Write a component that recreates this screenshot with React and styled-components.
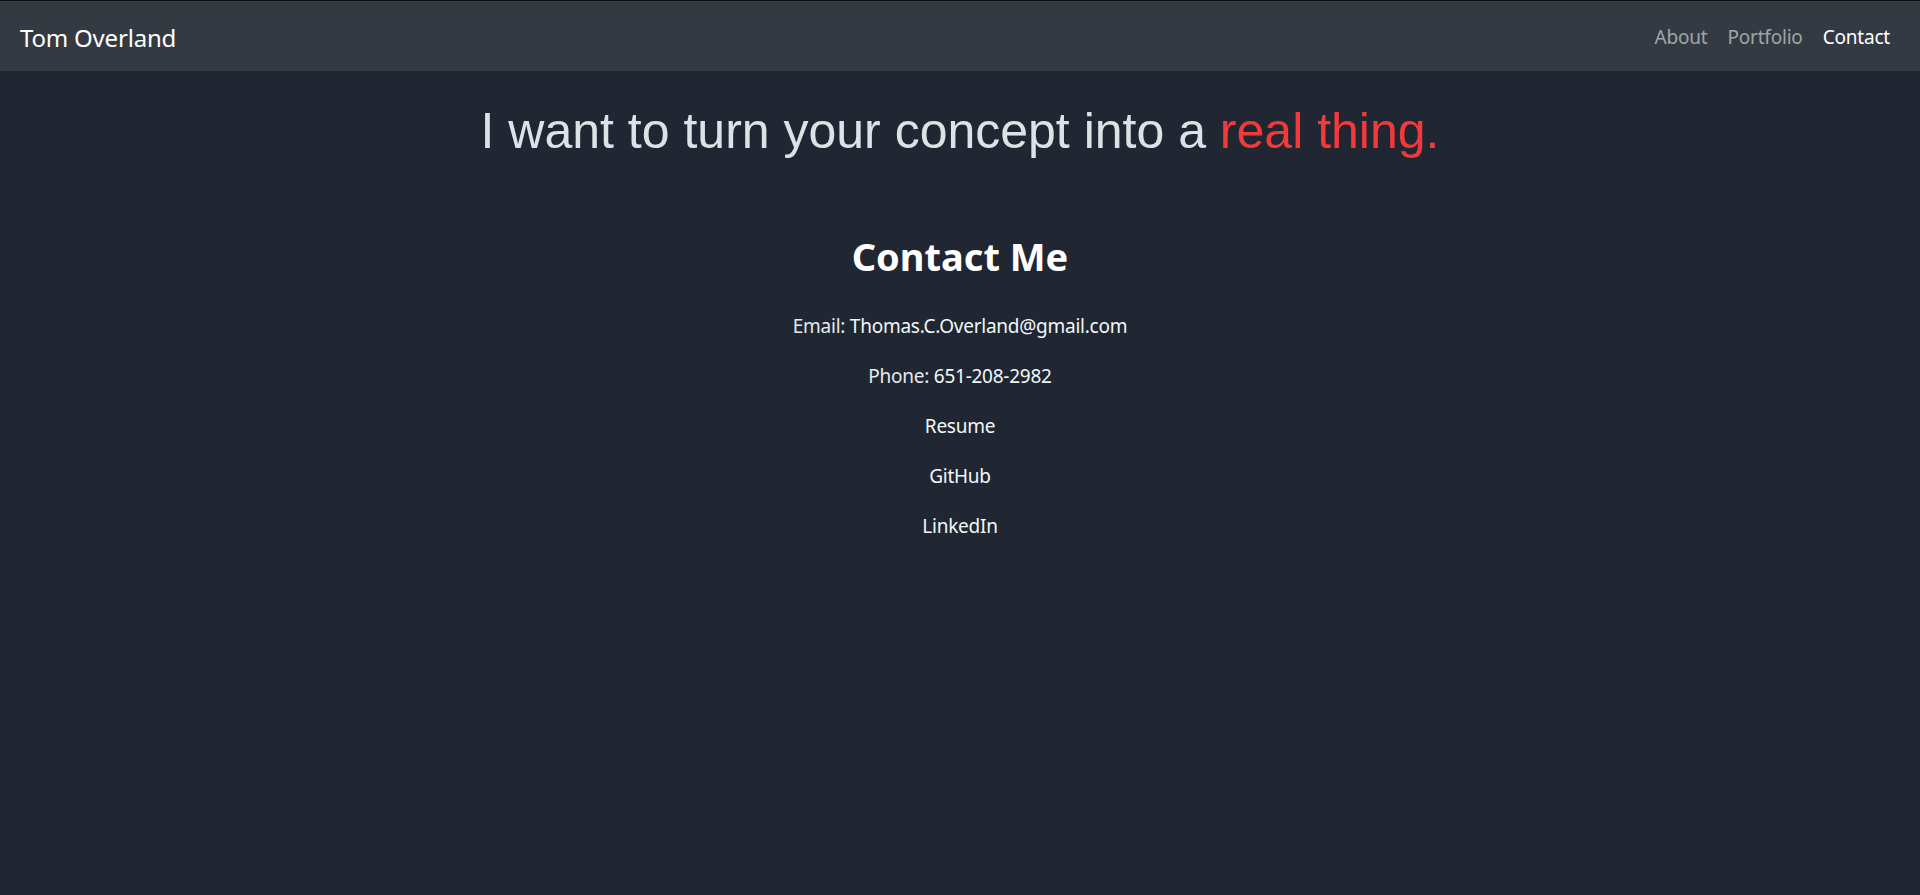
import React from "react";
import styled, { createGlobalStyle } from "styled-components";

const Global = createGlobalStyle`
  html, body { margin: 0; padding: 0; background: #212732; }
  body { font-family: "Noto Sans", "Open Sans", sans-serif; color: #f1f3f5; }
`;

const Page = styled.div`
  min-height: 895px;
  background: #212732;
  border-top: 1px solid #0d0f11;
  box-sizing: border-box;
`;

const NavBar = styled.nav`
  height: 70px;
  background: #343a42;
  display: flex;
  align-items: center;
  justify-content: space-between;
  padding: 2px 20px 0;
  box-sizing: border-box;
`;

const Brand = styled.a`
  font-size: 24px;
  color: #ffffff;
  text-decoration: none;
  letter-spacing: -0.2px;
`;

const NavList = styled.div`
  display: flex;
`;

const NavLink = styled.a`
  font-size: 19px;
  padding: 0 10px;
  text-decoration: none;
  color: ${(p) => (p.$active ? "#ffffff" : "rgba(255,255,255,0.55)")};
  letter-spacing: -0.2px;
`;

const Headline = styled.h1`
  margin: 0;
  padding-top: 30px;
  text-align: center;
  font-family: "Liberation Sans", Arial, sans-serif;
  font-weight: 400;
  font-size: 50px;
  line-height: 60px;
  color: #dee2e6;
`;

const Accent = styled.span`
  color: #f23a3a;
`;

const Section = styled.section`
  display: flex;
  flex-direction: column;
  align-items: center;
  padding-top: 71px;
`;

const Title = styled.h2`
  margin: 0 0 31px;
  font-size: 38px;
  line-height: 48px;
  font-weight: 700;
  color: #ffffff;
`;

const Line = styled.p`
  margin: 0 0 20px;
  font-size: 19px;
  line-height: 30px;
  color: #e3ebef;
  letter-spacing: -0.25px;
`;

const Link = styled.a`
  color: #f1f7fa;
  text-decoration: none;
`;

export default function App() {
  return (
    <>
      <Global />
      <Page>
        <NavBar>
          <Brand href="#">Tom Overland</Brand>
          <NavList>
            <NavLink href="#">About</NavLink>
            <NavLink href="#">Portfolio</NavLink>
            <NavLink href="#" $active>Contact</NavLink>
          </NavList>
        </NavBar>
        <Headline>
          I want to turn your concept into a <Accent>real thing.</Accent>
        </Headline>
        <Section>
          <Title>Contact Me</Title>
          <Line>
            Email: <Link href="#">Thomas.C.Overland@gmail.com</Link>
          </Line>
          <Line>
            Phone: <Link href="#">651-208-2982</Link>
          </Line>
          <Line>
            <Link href="#">Resume</Link>
          </Line>
          <Line>
            <Link href="#">GitHub</Link>
          </Line>
          <Line>
            <Link href="#">LinkedIn</Link>
          </Line>
        </Section>
      </Page>
    </>
  );
}
